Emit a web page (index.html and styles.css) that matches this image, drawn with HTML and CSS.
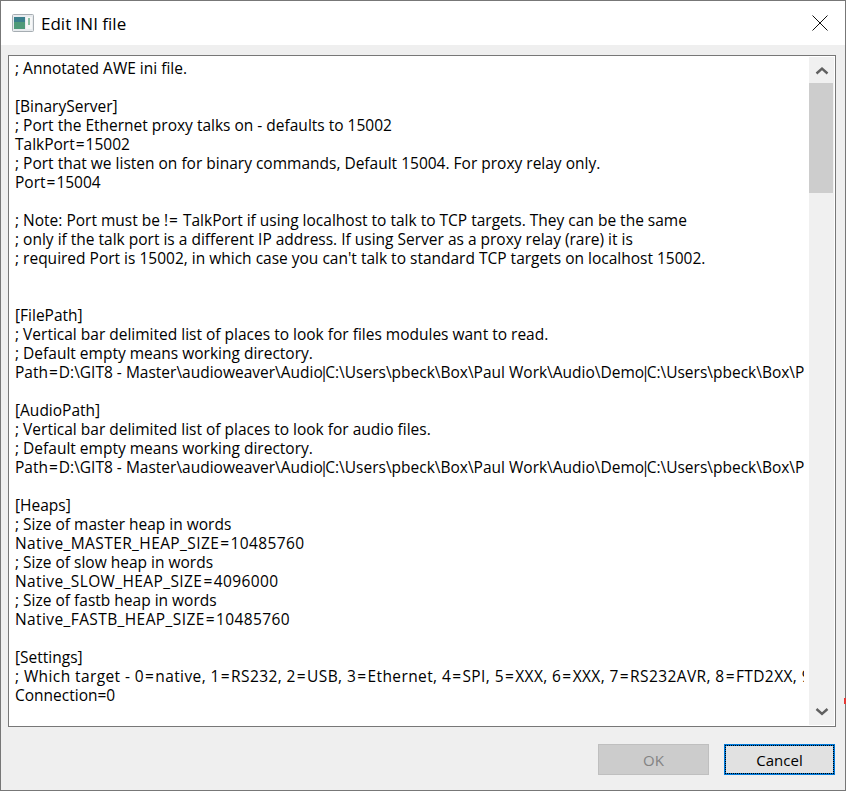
FILE: index.html
```html
<!DOCTYPE html>
<html lang="en">
<head>
  <meta charset="UTF-8">
  <title>Edit INI file</title>
  <link rel="stylesheet" href="styles.css">
</head>
<body>
  <div class="dialog">
    <div class="titlebar">
      <svg class="app-icon" width="22" height="18" viewBox="0 0 22 18">
        <rect x="0.5" y="0.5" width="21" height="17" rx="1" fill="#e8ebee" stroke="#a6adb2"/>
        <rect x="2" y="3" width="11" height="12" fill="#4f9a78"/>
        <rect x="2" y="3" width="11" height="5" fill="#3a7f8c"/>
        <rect x="14" y="3" width="6" height="12" fill="#f6f7f7"/>
        <rect x="16" y="4" width="2" height="7" fill="#8fc0a4"/>
      </svg>
      <span class="title">Edit INI file</span>
      <svg class="close" width="16" height="16" viewBox="0 0 16 16">
        <path d="M0.5 0.5L15.5 15.5M15.5 0.5L0.5 15.5" stroke="#111" stroke-width="1" fill="none"/>
      </svg>
    </div>
    <div class="content">
      <div class="editor">
<pre class="text">; Annotated AWE ini file.

[BinaryServer]
; Port the Ethernet proxy talks on - defaults to 15002
TalkPort<span class="eq">=</span>15002
; Port that we listen on for binary commands, Default 15004. For proxy relay only.
Port<span class="eq">=</span>15004

; Note: Port must be !<span class="eq">=</span> TalkPort if using localhost to talk to TCP targets. They can be the same
; only if the talk port is a different IP address. If using Server as a proxy relay (rare) it is
; required Port is 15002, in which case you can't talk to standard TCP targets on localhost 15002.


[FilePath]
; Vertical bar delimited list of places to look for files modules want to read.
; Default empty means working directory.
Path<span class="eq">=</span>D:\GIT8 - Master\audioweaver\Audio<span class="bar">|</span>C:\Users\pbeck\Box\Paul Work\Audio\Demo<span class="bar">|</span>C:\Users\pbeck\Box\Paul Work

[AudioPath]
; Vertical bar delimited list of places to look for audio files.
; Default empty means working directory.
Path<span class="eq">=</span>D:\GIT8 - Master\audioweaver\Audio<span class="bar">|</span>C:\Users\pbeck\Box\Paul Work\Audio\Demo<span class="bar">|</span>C:\Users\pbeck\Box\Paul Work

[Heaps]
; Size of master heap in words
<span class="caps">Native_MASTER_HEAP_SIZE<span class="eq">=</span>10485760</span>
; Size of slow heap in words
<span class="caps">Native_SLOW_HEAP_SIZE<span class="eq">=</span>4096000</span>
; Size of fastb heap in words
<span class="caps">Native_FASTB_HEAP_SIZE<span class="eq">=</span>10485760</span>

[Settings]
<span class="caps">; Which target - 0<span class="eq">=</span>native, 1<span class="eq">=</span>RS232, 2<span class="eq">=</span>USB, 3<span class="eq">=</span>Ethernet, 4<span class="eq">=</span>SPI, 5<span class="eq">=</span>XXX, 6<span class="eq">=</span>XXX, 7<span class="eq">=</span>RS232AVR, 8<span class="eq">=</span>FTD2XX, 9<span class="eq">=</span>Other</span>
Connection=0</pre>
        <div class="scrollbar">
          <button class="arrow">
            <svg width="16" height="10" viewBox="0 0 16 10"><path d="M2.5 8.5L8 3.5L13.5 8.5" stroke="#606060" stroke-width="2.4" fill="none"/></svg>
          </button>
          <div class="track"><div class="thumb"></div></div>
          <button class="arrow">
            <svg width="16" height="10" viewBox="0 0 16 10"><path d="M2.5 2L8 7L13.5 2" stroke="#606060" stroke-width="2.4" fill="none"/></svg>
          </button>
        </div>
      </div>
    </div>
    <div class="footer">
      <button class="btn btn-ok" disabled>OK</button>
      <button class="btn btn-cancel"><span class="focus-ring">Cancel</span></button>
    </div>
  </div>
  <div class="stray-dot"></div>
</body>
</html>
```

FILE: styles.css
```css
html, body {
  margin: 0;
  height: 100%;
  background: #fff;
}
body {
  font-family: "Open Sans", "Noto Sans", sans-serif;
  color: #000;
  overflow: hidden;
}
.dialog {
  box-sizing: border-box;
  width: 846px;
  height: 791px;
  border: 1px solid #777;
  background: #efefef;
  display: flex;
  flex-direction: column;
}
.titlebar {
  height: 44px;
  flex: none;
  background: #fff;
  display: flex;
  align-items: center;
  padding: 0 17px 0 11px;
}
.app-icon { margin-top: -1px; }
.title {
  margin-left: 7px;
  font-size: 17px;
  flex: 1;
}
.close { display: block; }
.content {
  flex: none;
  padding: 10px 9px 0 7px;
}
.editor {
  box-sizing: border-box;
  height: 672px;
  border: 1px solid #777;
  background: #fff;
  display: flex;
}
.text {
  flex: 1;
  min-width: 0;
  margin: 0 5px 0 0;
  padding: 3px 0 0 6px;
  overflow: hidden;
  font-family: inherit;
  font-size: 15.5px;
  line-height: 19px;
  white-space: pre;
}
.eq { margin: 0 1px; }
.bar { margin: 0 -3px; }
.caps { letter-spacing: 0.4px; }
.scrollbar {
  width: 25px;
  margin: 1px 1px 1px 0;
  background: #f0f0f0;
  display: flex;
  flex-direction: column;
}
.arrow {
  height: 26px;
  flex: none;
  padding: 0;
  border: none;
  background: none;
  display: flex;
  align-items: center;
  justify-content: center;
}
.track { flex: 1; }
.thumb {
  height: 110px;
  margin-right: 1px;
  background: #cdcdcd;
}
.footer {
  flex: 1;
  display: flex;
  justify-content: flex-end;
  align-items: flex-start;
  gap: 15px;
  padding: 17px 10px 0 0;
}
.btn {
  box-sizing: border-box;
  width: 111px;
  height: 31px;
  padding: 0;
  font-family: inherit;
  font-size: 15px;
}
.btn-ok {
  border: 1px solid #bfbfbf;
  background: #ccc;
  color: #838383;
}
.btn-cancel {
  border: 2px solid #0078d7;
  background: #e1e1e1;
  color: #000;
  padding: 0;
}
.focus-ring {
  display: flex;
  align-items: center;
  justify-content: center;
  height: 100%;
  outline: 1px dotted #000;
}
.stray-dot {
  position: absolute;
  left: 844px;
  top: 698px;
  width: 2px;
  height: 6px;
  background: #e53935;
}
```
